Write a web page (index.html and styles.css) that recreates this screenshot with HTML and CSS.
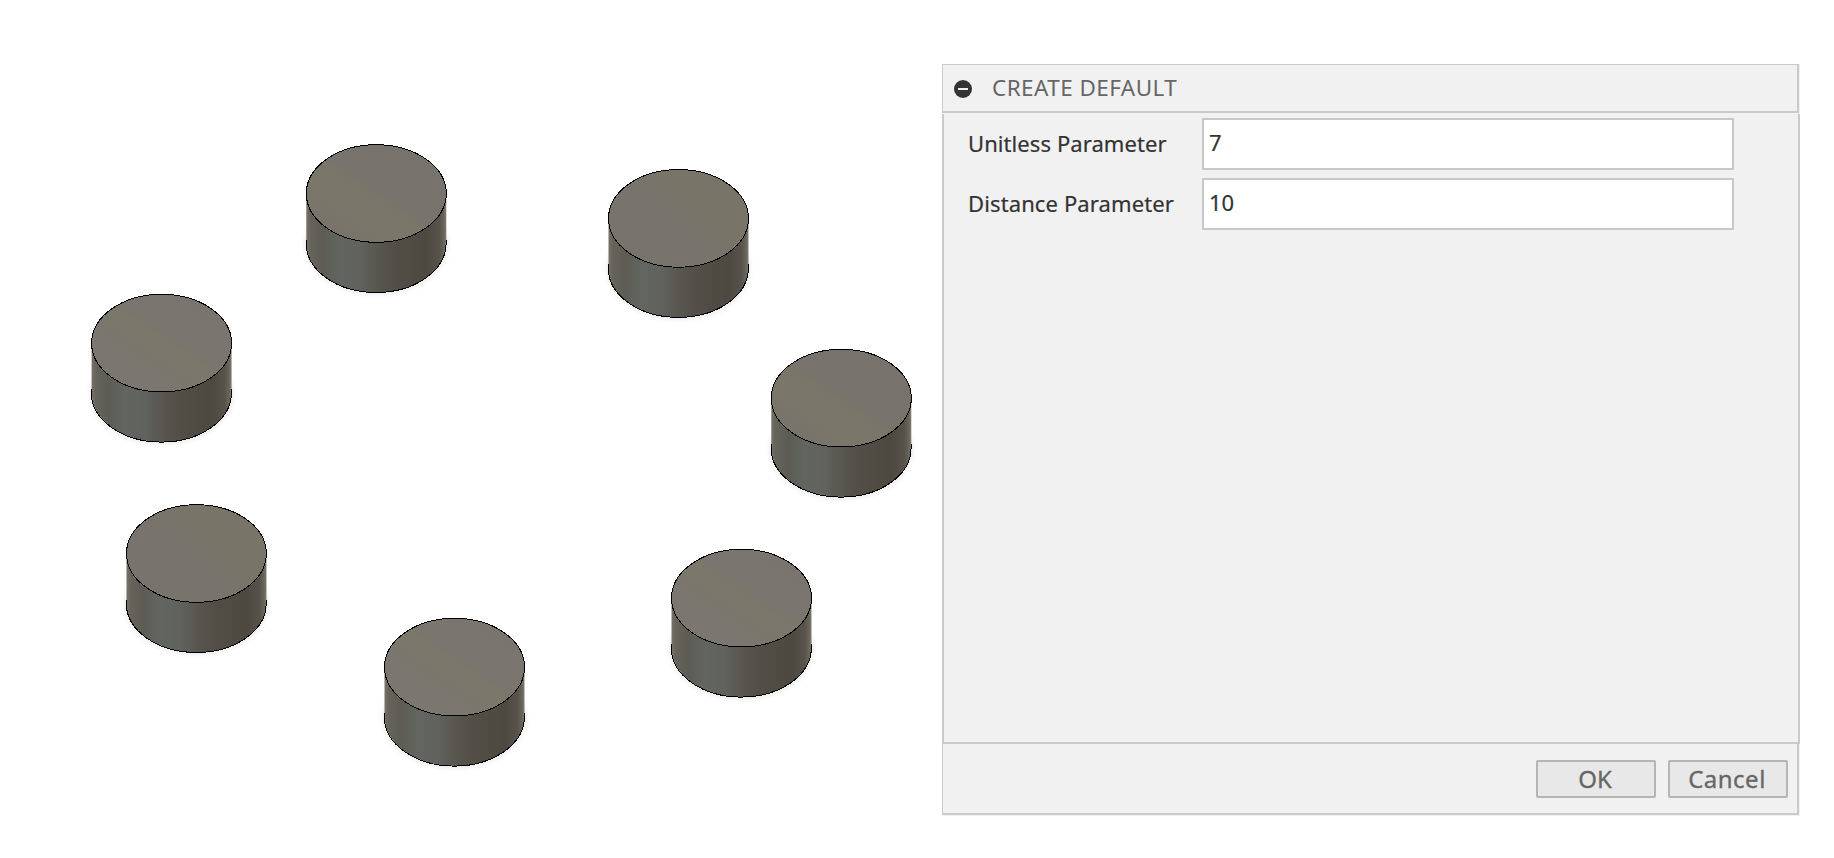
FILE: index.html
```html
<!DOCTYPE html>
<html lang="en">
<head>
<meta charset="utf-8">
<title>Create Default</title>
<link rel="stylesheet" href="styles.css">
</head>
<body>
<main class="workspace">
  <svg class="viewport" width="942" height="858" viewBox="0 0 942 858">
    <defs>
      <linearGradient id="side" x1="0" x2="1" y1="0" y2="0">
        <stop offset="0" stop-color="#777266"/>
        <stop offset=".03" stop-color="#66635a"/>
        <stop offset=".12" stop-color="#5c5c55"/>
        <stop offset=".24" stop-color="#626660"/>
        <stop offset=".38" stop-color="#60625d"/>
        <stop offset=".53" stop-color="#57544d"/>
        <stop offset=".68" stop-color="#514c44"/>
        <stop offset=".86" stop-color="#4d4940"/>
        <stop offset=".95" stop-color="#57534a"/>
        <stop offset=".985" stop-color="#6a665b"/>
        <stop offset="1" stop-color="#858072"/>
      </linearGradient>
      <linearGradient id="lid-low" gradientUnits="userSpaceOnUse" x1="-28" y1="42" x2="28" y2="-42">
        <stop offset="0" stop-color="#78746a"/>
        <stop offset=".25" stop-color="#7a7669"/>
        <stop offset=".48" stop-color="#797568"/>
        <stop offset=".54" stop-color="#78736c"/>
        <stop offset="1" stop-color="#77726b"/>
      </linearGradient>
      <linearGradient id="lid-band" gradientUnits="userSpaceOnUse" x1="-28" y1="42" x2="28" y2="-42">
        <stop offset="0" stop-color="#7b766f"/>
        <stop offset=".25" stop-color="#7b766e"/>
        <stop offset=".42" stop-color="#7b776a"/>
        <stop offset=".54" stop-color="#7b776a"/>
        <stop offset=".62" stop-color="#7a756e"/>
        <stop offset="1" stop-color="#79746d"/>
      </linearGradient>
      <linearGradient id="lid-high" gradientUnits="userSpaceOnUse" x1="-32" y1="32" x2="32" y2="-32">
        <stop offset="0" stop-color="#78736c"/>
        <stop offset=".55" stop-color="#78736b"/>
        <stop offset=".72" stop-color="#787467"/>
        <stop offset="1" stop-color="#787467"/>
      </linearGradient>
      <filter id="soft" x="-20%" y="-20%" width="140%" height="140%"><feGaussianBlur stdDeviation="3"/></filter>
      <g id="wall">
        <ellipse cy="51" rx="70" ry="48.5" fill="#000" opacity=".14" filter="url(#soft)"/>
        <path d="M-70 0V50A70 49 0 0 0 70 50V0Z" fill="url(#side)"/>
        <path d="M-70.2 46V50A70 49 0 0 0 69.8 50V46" class="edge"/>
      </g>
      <ellipse id="lid" rx="70" ry="48.8" class="edge"/>
    </defs>
    <g transform="translate(376.3 193.5)"><use href="#wall"/><use href="#lid" fill="url(#lid-low)"/></g>
    <g transform="translate(678.5 218.4)"><use href="#wall"/><use href="#lid" fill="url(#lid-high)"/></g>
    <g transform="translate(161.6 343.1)"><use href="#wall"/><use href="#lid" fill="url(#lid-band)"/></g>
    <g transform="translate(841.3 398.1)"><use href="#wall"/><use href="#lid" fill="url(#lid-low)"/></g>
    <g transform="translate(196.5 553.5)"><use href="#wall"/><use href="#lid" fill="url(#lid-high)"/></g>
    <g transform="translate(454.5 667.1)"><use href="#wall"/><use href="#lid" fill="url(#lid-band)"/></g>
    <g transform="translate(741.5 598.1)"><use href="#wall"/><use href="#lid" fill="url(#lid-band)"/></g>
  </svg>
  <section class="dialog">
    <header class="dialog-header">
      <svg class="collapse" width="18" height="18" viewBox="0 0 18 18"><circle cx="9" cy="9" r="9" fill="#333"/><path d="M4 9H14" stroke="#eee" stroke-width="2"/></svg>
      <h1 class="title">CREATE DEFAULT</h1>
    </header>
    <div class="dialog-body">
      <div class="row"><span class="label unitless">Unitless Parameter</span><div class="field">7</div></div>
      <div class="row"><span class="label distance">Distance Parameter</span><div class="field">10</div></div>
    </div>
    <footer class="dialog-footer">
      <button class="btn ok">OK</button>
      <button class="btn cancel">Cancel</button>
    </footer>
  </section>
</main>
</body>
</html>
```
FILE: styles.css
```css
* { box-sizing: border-box; }
body { margin: 0; background: #fff; font-family: "Noto Sans", "Open Sans", sans-serif; }
.workspace { display: flex; align-items: flex-start; width: 1834px; height: 858px; overflow: hidden; }
.viewport { flex: none; }
.edge { stroke: #000; stroke-width: 1; shape-rendering: crispEdges; }
path.edge { fill: none; }
.dialog { display: flex; flex-direction: column; width: 858px; height: 752px; margin-top: 64px; background: #f1f1f1; }
.dialog-header { display: flex; align-items: center; gap: 20px; width: 857px; height: 49px; padding-left: 11px; margin-bottom: 1px; border: solid #cacaca; border-width: 1px 2px 2px 1px; }
.collapse { flex: none; margin-top: 2px; }
.title { margin: 0; font-size: 22.5px; line-height: 30px; font-weight: 400; letter-spacing: .43px; color: #666; white-space: nowrap; }
.dialog-body { display: flex; flex-direction: column; gap: 8px; height: 630px; padding: 4px 0 0 24px; border: solid #cacaca; border-width: 0 2px 2px; }
.row { display: flex; align-items: center; height: 52px; }
.label { width: 234px; padding-bottom: 2px; font-size: 22px; line-height: 30px; color: #333; white-space: nowrap; -webkit-text-stroke: .2px #333; }
.unitless { letter-spacing: .08px; }
.distance { letter-spacing: .12px; }
.field { width: 532px; height: 52px; padding-left: 5px; border: 2px solid #c8c8c8; background: #fff; color: #333; font-size: 22px; line-height: 45px; -webkit-text-stroke: .2px #333; }
.dialog-footer { display: flex; justify-content: flex-end; gap: 12px; width: 857px; height: 71px; padding: 16px 9px 0 0; border: solid #cacaca; border-width: 0 2px 2px 1px; }
.btn { width: 120px; height: 38px; padding: 0 2px 0 0; border: 2px solid #b5b5b5; border-radius: 2px; background: #e8e8e8; color: #666; font: 24px/32px "Noto Sans", "Open Sans", sans-serif; -webkit-text-stroke: .3px #666; }
.cancel { letter-spacing: .5px; }
```
